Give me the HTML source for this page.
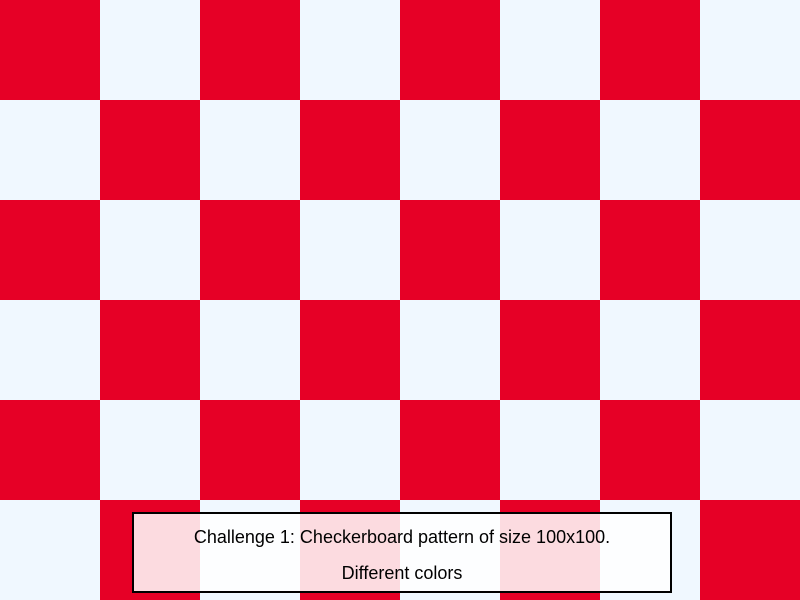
<!DOCTYPE html>
<html><head><style>
html,body{margin:0;padding:0;width:800px;height:600px;overflow:hidden}
.bg{position:absolute;left:0;top:0;width:800px;height:600px;background:
conic-gradient(#f0f8ff 0 25%,#e60026 0 50%,#f0f8ff 0 75%,#e60026 0) 0 0/200px 200px;}
.box{position:absolute;left:132px;top:512px;width:536px;height:77px;border:2px solid #000;background:rgba(255,255,255,0.86);font-family:"Liberation Sans",sans-serif;font-size:18px;color:#000;text-align:center}
.l1{position:absolute;left:0;right:0;top:13px}
.l2{position:absolute;left:0;right:0;top:49px}
</style></head><body>
<div class="bg"></div>
<div class="box"><div class="l1">Challenge 1: Checkerboard pattern of size 100x100.</div><div class="l2">Different colors</div></div>
</body></html>
